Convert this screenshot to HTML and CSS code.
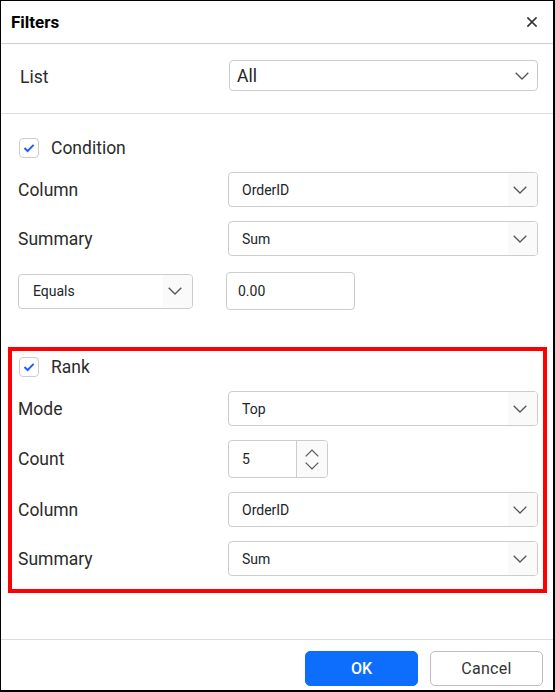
FILE: index.html
```html
<!DOCTYPE html>
<html lang="en">
<head>
<meta charset="utf-8">
<title>Filters</title>
<link rel="stylesheet" href="styles.css">
</head>
<body>
<div class="dialog">
  <div class="header">
    <span class="title">Filters</span>
    <svg class="close" width="10" height="10" viewBox="0 0 10 10"><path d="M1 1 L9 9 M9 1 L1 9" stroke="#333" stroke-width="1.7" fill="none" stroke-linecap="square"/></svg>
  </div>
  <div class="main">
    <div class="section list-section">
      <div class="row list-row">
        <span class="label">List</span>
        <div class="dd dd-list">
          <span class="dd-text big">All</span>
          <span class="dd-arrow plain"><svg width="14" height="8" viewBox="0 0 14 8"><path d="M0.7 0.7 L7 7 L13.3 0.7" stroke="#555" stroke-width="1.3" fill="none"/></svg></span>
        </div>
      </div>
    </div>
    <div class="section cond-section">
      <div class="check-row first">
        <span class="checkbox"><svg width="20" height="20" viewBox="0 0 20 20"><path d="M5.5 10 L8.6 13.1 L14.6 6.9" stroke="#1a5cff" stroke-width="2" fill="none"/></svg></span>
        <span class="check-label">Condition</span>
      </div>
      <div class="row">
        <span class="label">Column</span>
        <div class="dd">
          <span class="dd-text">OrderID</span>
          <span class="dd-arrow"><svg width="14" height="8" viewBox="0 0 14 8"><path d="M0.7 0.7 L7 7 L13.3 0.7" stroke="#555" stroke-width="1.3" fill="none"/></svg></span>
        </div>
      </div>
      <div class="row">
        <span class="label">Summary</span>
        <div class="dd">
          <span class="dd-text">Sum</span>
          <span class="dd-arrow"><svg width="14" height="8" viewBox="0 0 14 8"><path d="M0.7 0.7 L7 7 L13.3 0.7" stroke="#555" stroke-width="1.3" fill="none"/></svg></span>
        </div>
      </div>
      <div class="row op-row">
        <div class="dd dd-op">
          <span class="dd-text">Equals</span>
          <span class="dd-arrow"><svg width="14" height="8" viewBox="0 0 14 8"><path d="M0.7 0.7 L7 7 L13.3 0.7" stroke="#555" stroke-width="1.3" fill="none"/></svg></span>
        </div>
        <div class="input-val"><span class="dd-text">0.00</span></div>
      </div>
    </div>
    <div class="section rank-section">
      <div class="check-row rank">
        <span class="checkbox"><svg width="20" height="20" viewBox="0 0 20 20"><path d="M5.5 10 L8.6 13.1 L14.6 6.9" stroke="#1a5cff" stroke-width="2" fill="none"/></svg></span>
        <span class="check-label">Rank</span>
      </div>
      <div class="row r-mode">
        <span class="label">Mode</span>
        <div class="dd">
          <span class="dd-text">Top</span>
          <span class="dd-arrow"><svg width="14" height="8" viewBox="0 0 14 8"><path d="M0.7 0.7 L7 7 L13.3 0.7" stroke="#555" stroke-width="1.3" fill="none"/></svg></span>
        </div>
      </div>
      <div class="row r-count">
        <span class="label">Count</span>
        <div class="numeric">
          <span class="dd-text">5</span>
          <span class="spin">
            <svg width="14" height="8" viewBox="0 0 14 8"><path d="M0.7 7.3 L7 1 L13.3 7.3" stroke="#555" stroke-width="1.2" fill="none"/></svg>
            <svg width="14" height="8" viewBox="0 0 14 8"><path d="M0.7 0.7 L7 7 L13.3 0.7" stroke="#555" stroke-width="1.2" fill="none"/></svg>
          </span>
        </div>
      </div>
      <div class="row">
        <span class="label">Column</span>
        <div class="dd">
          <span class="dd-text">OrderID</span>
          <span class="dd-arrow"><svg width="14" height="8" viewBox="0 0 14 8"><path d="M0.7 0.7 L7 7 L13.3 0.7" stroke="#555" stroke-width="1.3" fill="none"/></svg></span>
        </div>
      </div>
      <div class="row">
        <span class="label">Summary</span>
        <div class="dd">
          <span class="dd-text">Sum</span>
          <span class="dd-arrow"><svg width="14" height="8" viewBox="0 0 14 8"><path d="M0.7 0.7 L7 7 L13.3 0.7" stroke="#555" stroke-width="1.3" fill="none"/></svg></span>
        </div>
      </div>
    </div>
  </div>
  <div class="footer">
    <button class="btn btn-ok">OK</button>
    <button class="btn btn-cancel">Cancel</button>
  </div>
  <div class="highlight"></div>
</div>
</body>
</html>
```

FILE: styles.css
```css
* { box-sizing: border-box; }
html, body { margin: 0; padding: 0; background: #fff; }
body {
  font-family: Roboto, "Liberation Sans", sans-serif;
  color: #212529;
}
.dialog {
  position: relative;
  width: 555px;
  height: 692px;
  border-left: 1px solid #000;
  border-top: 1px solid #000;
  border-right: 2px solid #000;
  border-bottom: 2px solid #000;
  display: flex;
  flex-direction: column;
  background: #fff;
}
.header {
  height: 43px;
  border-bottom: 1px solid #cfcfcf;
  display: flex;
  align-items: center;
  justify-content: space-between;
  padding: 0 16px 0 10px;
  flex: none;
}
.title {
  font-size: 17px;
  font-weight: 700;
  color: #000;
  margin-top: -1px;
}
.close { display: block; margin-top: -1px; }
.main {
  flex: 1;
  display: flex;
  flex-direction: column;
}
.section { padding: 0 15px 0 17px; }
.list-section {
  padding: 16px 15px 0 19px;
  height: 70px;
  border-bottom: 1px solid #dcdcdc;
}
.row {
  display: flex;
  align-items: center;
  height: 35px;
  margin-top: 14px;
}
.label {
  width: 210px;
  flex: none;
  font-size: 17.5px;
  color: #2b2b2b;
}
.list-row { height: 31px; margin-top: 0; }
.list-row .label { width: 209px; padding-top: 3px; }
.dd {
  flex: 1;
  height: 100%;
  border: 1px solid #cccccc;
  border-radius: 4px;
  display: flex;
  align-items: center;
  justify-content: space-between;
  overflow: hidden;
  background: #fff;
}
.dd-text {
  font-size: 14px;
  color: #212529;
  padding-left: 13px;
}
.dd-text.big { font-size: 17.5px; padding-left: 7px; padding-top: 0; }
.dd-arrow {
  width: 29px;
  height: 100%;
  background: #fafafa;
  display: flex;
  align-items: center;
  justify-content: flex-start;
  padding-left: 5px;
}
.dd-arrow svg { display: block; }
.dd-arrow.plain { background: transparent; width: 22px; padding-left: 0; }
.check-row {
  display: flex;
  align-items: center;
  height: 20px;
}
.check-row.first { margin-top: 24px; }
.check-row.rank { margin-top: 47px; }
.checkbox {
  width: 20px;
  height: 20px;
  border: 1px solid #cccccc;
  border-radius: 4px;
  display: flex;
  align-items: center;
  justify-content: center;
  flex: none;
  margin-left: 1px;
}
.checkbox svg { display: block; flex: none; }
.check-label {
  font-size: 17.5px;
  color: #2b2b2b;
  margin-left: 12px;
}
.op-row {
  height: 38px;
  margin-top: 16px;
}
.dd-op {
  flex: none;
  width: 175px;
  height: 35px;
}
.dd-op .dd-text { padding-left: 14px; }
.input-val {
  width: 129px;
  height: 38px;
  margin-left: 33px;
  border: 1px solid #cccccc;
  border-radius: 4px;
  display: flex;
  align-items: center;
}
.input-val .dd-text { padding-left: 11px; }
.r-mode { margin-top: 14px; }
.r-count { height: 38px; }
.numeric {
  width: 100px;
  height: 38px;
  border: 1px solid #cccccc;
  border-radius: 4px;
  display: flex;
  align-items: center;
  justify-content: space-between;
  overflow: hidden;
}
.spin {
  width: 31px;
  height: 100%;
  border-left: 1px solid #cccccc;
  background: #fafafa;
  display: flex;
  flex-direction: column;
  align-items: center;
  justify-content: center;
  gap: 5px;
}
.spin svg { display: block; }
.footer {
  flex: none;
  height: 51px;
  border-top: 1px solid #dcdcdc;
  display: flex;
  justify-content: flex-end;
  align-items: flex-start;
  gap: 12px;
  padding: 11px 10px 0 0;
}
.btn {
  width: 113px;
  height: 35px;
  border-radius: 5px;
  font-family: Roboto, "Liberation Sans", sans-serif;
  font-size: 16px;
  cursor: pointer;
}
.btn-ok {
  background: #0d6efd;
  border: 1px solid #0d6efd;
  color: #fff;
  font-weight: 500;
}
.btn-cancel {
  background: #fff;
  border: 1px solid #bdbdbd;
  color: #333;
  letter-spacing: 0.3px;
}
.highlight {
  position: absolute;
  left: 7px;
  top: 346px;
  width: 539px;
  height: 246px;
  border: 4px solid #ff0000;
  pointer-events: none;
}
```
